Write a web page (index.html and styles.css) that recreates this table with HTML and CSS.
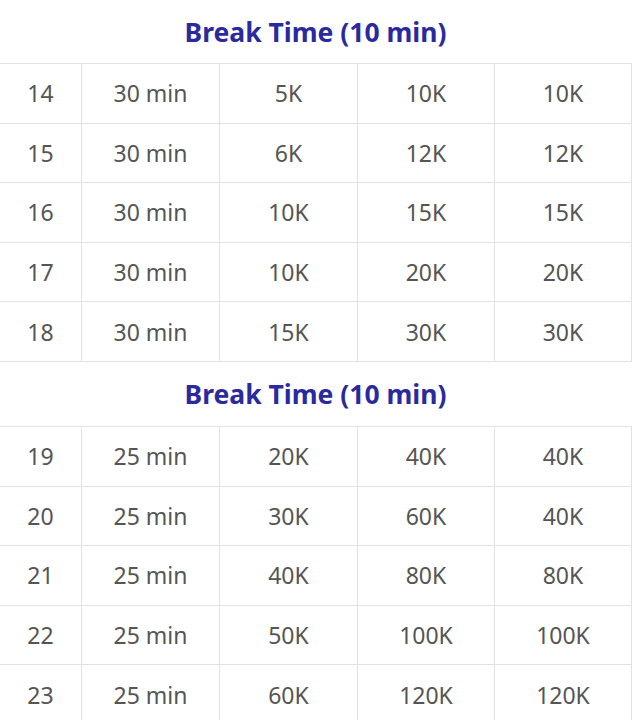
FILE: index.html
```html
<!DOCTYPE html>
<html>
<head>
<meta charset="utf-8">
<link rel="stylesheet" href="styles.css">
</head>
<body>
<table class="sched">
  <colgroup>
    <col class="c-lvl"><col class="c-time"><col class="c-a"><col class="c-b"><col class="c-c">
  </colgroup>
  <tbody>
    <tr class="brk first"><th colspan="5">Break Time (10 min)</th></tr>
    <tr><td>14</td><td>30 min</td><td>5K</td><td>10K</td><td>10K</td></tr>
    <tr><td>15</td><td>30 min</td><td>6K</td><td>12K</td><td>12K</td></tr>
    <tr><td>16</td><td>30 min</td><td>10K</td><td>15K</td><td>15K</td></tr>
    <tr><td>17</td><td>30 min</td><td>10K</td><td>20K</td><td>20K</td></tr>
    <tr><td>18</td><td>30 min</td><td>15K</td><td>30K</td><td>30K</td></tr>
    <tr class="brk"><th colspan="5">Break Time (10 min)</th></tr>
    <tr><td>19</td><td>25 min</td><td>20K</td><td>40K</td><td>40K</td></tr>
    <tr><td>20</td><td>25 min</td><td>30K</td><td>60K</td><td>40K</td></tr>
    <tr><td>21</td><td>25 min</td><td>40K</td><td>80K</td><td>80K</td></tr>
    <tr><td>22</td><td>25 min</td><td>50K</td><td>100K</td><td>100K</td></tr>
    <tr><td>23</td><td>25 min</td><td>60K</td><td>120K</td><td>120K</td></tr>
  </tbody>
</table>
</body>
</html>
```
FILE: styles.css
```css
html, body {
  margin: 0;
  padding: 0;
  background: #ffffff;
}
body {
  font-family: "Noto Sans", "Open Sans", sans-serif;
  overflow: hidden;
}
.sched {
  border-collapse: collapse;
  table-layout: fixed;
  width: 632px;
  margin-left: -1px;
}
.c-lvl { width: 82px; }
.c-time { width: 138px; }
.c-a { width: 138px; }
.c-b { width: 137px; }
.c-c { width: 137px; }
.sched td {
  border: 1px solid #e2e2e2;
  height: 58.6px;
  padding: 0;
  text-align: center;
  vertical-align: middle;
  font-size: 23px;
  color: #555555;
  font-weight: 400;
}
.brk th {
  border: none;
  border-bottom: 1px solid #e2e2e2;
  height: 64px;
  padding: 0;
  text-align: center;
  vertical-align: middle;
  font-size: 26.5px;
  font-weight: 700;
  color: #2a2a9e;
}
.brk.first th {
  height: 63px;
}
```
